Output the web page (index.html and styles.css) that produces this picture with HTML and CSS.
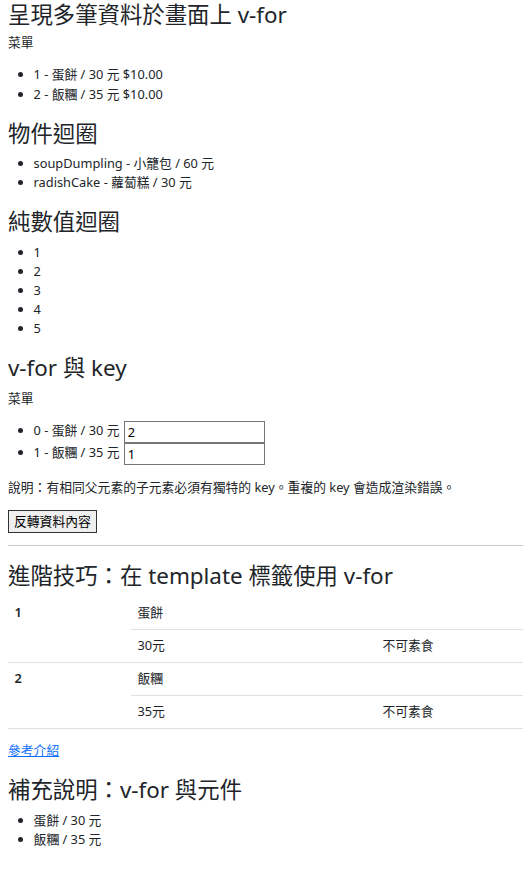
FILE: index.html
```html
<!DOCTYPE html>
<html lang="zh-Hant">
<head>
<meta charset="utf-8">
<title>v-for</title>
<link rel="stylesheet" href="styles.css">
</head>
<body>
<h3 class="heading heading-first">呈現多筆資料於畫面上 v-for</h3>
<p class="para">菜單</p>
<ul class="list">
  <li>1 - 蛋餅 / 30 元 $10.00</li>
  <li>2 - 飯糰 / 35 元 $10.00</li>
</ul>

<h3 class="heading">物件迴圈</h3>
<ul class="list">
  <li>soupDumpling - 小籠包 / 60 元</li>
  <li>radishCake - 蘿蔔糕 / 30 元</li>
</ul>

<h3 class="heading">純數值迴圈</h3>
<ul class="list">
  <li>1</li>
  <li>2</li>
  <li>3</li>
  <li>4</li>
  <li>5</li>
</ul>

<h3 class="heading">v-for 與 key</h3>
<p class="para">菜單</p>
<ul class="list key-list">
  <li>0 - 蛋餅 / 30 元 <input class="field" type="text" value="2"></li>
  <li>1 - 飯糰 / 35 元 <input class="field" type="text" value="1"></li>
</ul>
<p class="para">說明：有相同父元素的子元素必須有獨特的 key。重複的 key 會造成渲染錯誤。</p>
<button class="btn" type="button">反轉資料內容</button>
<hr class="divider">

<h3 class="heading">進階技巧：在 template 標籤使用 v-for</h3>
<table class="table">
  <colgroup>
    <col class="col-id">
    <col class="col-name">
    <col>
  </colgroup>
  <tbody>
    <tr>
      <th rowspan="2">1</th>
      <td>蛋餅</td>
      <td></td>
    </tr>
    <tr>
      <td>30元</td>
      <td>不可素食</td>
    </tr>
    <tr>
      <th rowspan="2">2</th>
      <td>飯糰</td>
      <td></td>
    </tr>
    <tr>
      <td>35元</td>
      <td>不可素食</td>
    </tr>
  </tbody>
</table>
<p class="para"><a class="link" href="#">參考介紹</a></p>

<h3 class="heading">補充說明：v-for 與元件</h3>
<ul class="list">
  <li>蛋餅 / 30 元</li>
  <li>飯糰 / 35 元</li>
</ul>
</body>
</html>
```

FILE: styles.css
```css
html, body {
  background: #fff;
}

body {
  margin: 0 0 0 8px;
  font-family: "Noto Sans", "Noto Sans CJK TC", sans-serif;
  font-size: 12.8px;
  line-height: 19.2px;
  color: #212529;
}

.heading {
  margin: 0 0 6.4px;
  padding-top: 2px;
  font-size: 22.4px;
  font-weight: 400;
  line-height: 29px;
}

.heading-first {
  padding-top: 0;
  margin-bottom: 4.4px;
}

.para {
  margin: 0 0 12.8px;
}

.list {
  margin: 0 0 12.8px;
  padding-left: 25.6px;
}

.key-list li {
  height: 22px;
}

.field {
  box-sizing: border-box;
  width: 141px;
  height: 22px;
  margin: 0 0 0 1px;
  padding: 0 3px;
  border: 1px solid #767676;
  font: inherit;
  line-height: 20px;
  color: #000;
  vertical-align: top;
  background: #fff;
}

.btn {
  display: block;
  box-sizing: border-box;
  height: 23px;
  margin: 0;
  padding: 0 5px;
  border: 1px solid #333;
  background: #efefef;
  font: inherit;
  line-height: 21px;
  color: #000;
  border-radius: 0;
}

.divider {
  margin: 12.8px 0;
  border: 0;
  border-top: 1px solid #c8c9ca;
  height: 0;
}

.table {
  width: 515px;
  margin-bottom: 12.8px;
  border-collapse: collapse;
  table-layout: fixed;
}

.col-id {
  width: 123px;
}

.col-name {
  width: 245px;
}

.table th,
.table td {
  padding: 6.4px;
  border-bottom: 1px solid #dee2e6;
  text-align: left;
  vertical-align: top;
  line-height: 19.2px;
}

.table th {
  font-weight: 600;
}

.link {
  color: #0d6efd;
  text-decoration: underline;
}
```
